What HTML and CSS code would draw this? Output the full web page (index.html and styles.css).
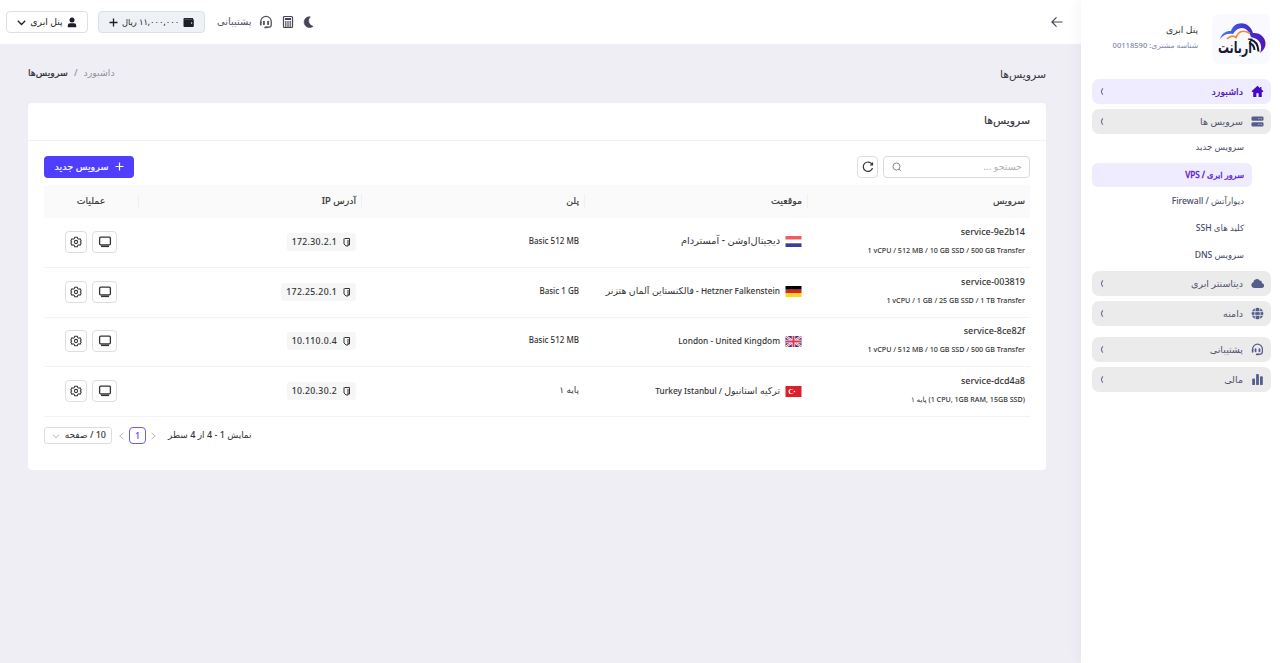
FILE: index.html
```html
<!DOCTYPE html>
<html lang="fa" dir="rtl">
<head>
    <meta charset="UTF-8">
    <meta name="viewport" content="width=device-width, initial-scale=1.0">
    <title>سرویس‌ها - پنل ابری</title>
    <link rel="stylesheet" href="styles.css">
</head>
<body>
    <svg class="sprite" width="0" height="0">
        <symbol id="chevron" viewBox="0 0 10 10"><path d="M6.200 1Q2.400 5 6.200 9" fill="none" stroke="currentColor" stroke-width="1.300"/></symbol>
        <symbol id="headset" viewBox="0 0 16 16"><path d="M2 9V7.500a6 6 0 0 1 12 0V11c0 2-1.500 3-4 3H8" fill="none" stroke="currentColor" stroke-width="1.500"/><rect x="1" y="7" width="2" height="5" rx="1" fill="currentColor"/><rect x="4.500" y="6.500" width="2.200" height="5" rx="1" fill="currentColor"/><rect x="9.300" y="6.500" width="2.200" height="5" rx="1" fill="currentColor"/><rect x="6" y="13" width="4" height="2.200" rx="1" fill="currentColor"/></symbol>
        <symbol id="copy" viewBox="0 0 9 10"><path d="M2.500 1.500h5v6.500h-1.500" fill="none" stroke="currentColor" stroke-width="1"/><path d="M2 1.500v5.500l2 2h2V3" fill="none" stroke="currentColor" stroke-width="1"/></symbol>
        <symbol id="monitor" viewBox="0 0 14 14"><rect x="1.600" y="2.200" width="10.800" height="7.600" rx="1" fill="none" stroke="currentColor" stroke-width="1.300"/><path d="M3 11.300h8" stroke="currentColor" stroke-width="1.600"/></symbol>
        <symbol id="gear" viewBox="0 0 14 14"><path d="M5.500 1.400h3l.5 1.700 1.100.6 1.700-.4 1.300 2.400-1.200 1.300 1.200 1.300-1.300 2.400-1.700-.4-1.100.6-.5 1.700h-3L5 10.900l-1.100-.6-1.700.4L.9 8.300 2.100 7 .9 5.700l1.300-2.400 1.700.4L5 3.100z" fill="none" stroke="currentColor" stroke-width="1.200" stroke-linejoin="round"/><circle cx="7" cy="7" r="1.900" fill="none" stroke="currentColor" stroke-width="1.200"/></symbol>
    </svg>

    <div class="app">
        <aside class="sidebar">
            <div class="brand">
                <div class="brand-logo">
                    <svg width="57" height="50" viewBox="0 0 57 50">
                        <defs>
                            <linearGradient id="cloud" x1="0" x2="1"><stop offset="0" stop-color="#4b7df2"/><stop offset=".5" stop-color="#3d3bd6"/><stop offset="1" stop-color="#5216b8"/></linearGradient>
                        </defs>
                        <path d="M7 25C9 18 14 17 18 17C21 7 36 6 40 19C51 18 58 31 47 39C50 31 47 25 38 23C35 12 25 11 20 20C15 19 11 20 7 25Z" fill="url(#cloud)"/>
                        <path d="M14 25q5-5 9-1.500q4-10 14-4" fill="none" stroke="#f38b3c" stroke-width="1.700"/>
                        <path d="M37 25.500q8 1.500 8.500 12M36 29q5 1 5.500 7" fill="none" stroke="#191a2c" stroke-width="2"/>
                        <text x="39" y="39" class="logo-text" direction="rtl" textLength="34" lengthAdjust="spacingAndGlyphs">آربانت</text>
                    </svg>
                </div>
                <div class="brand-info">
                    <div class="brand-name">پنل ابری</div>
                    <div class="brand-id">شناسه مشتری: 00118590</div>
                </div>
            </div>

            <nav class="menu">
                <a class="menu-item active">
                    <svg class="menu-icon" viewBox="0 0 14 14"><path d="M7 .8.6 6.700 1.600 7.800 2.400 7.200V13h3.400V9h2.400v4h3.400V7.200l.8.600 1-1.100-2.200-2V2.200H9.800v1.200z" fill="currentColor"/></svg>
                    <span>داشبورد</span>
                    <svg class="chevron"><use href="#chevron"/></svg>
                </a>
                <a class="menu-item">
                    <svg class="menu-icon" viewBox="0 0 14 14"><path d="M2 1.500h10a1.500 1.500 0 0 1 1.500 1.500v1.800A1.500 1.500 0 0 1 12 6.300H2A1.500 1.500 0 0 1 .5 4.800V3A1.500 1.500 0 0 1 2 1.500zM2 7.700h10a1.500 1.500 0 0 1 1.500 1.500V11a1.500 1.500 0 0 1-1.500 1.500H2A1.500 1.500 0 0 1 .5 11V9.200A1.500 1.500 0 0 1 2 7.700z" fill="currentColor"/><path d="M8 4h1m1.500 0h1M8 10h1m1.500 0h1" stroke="#ebebeb"/></svg>
                    <span>سرویس ها</span>
                    <svg class="chevron"><use href="#chevron"/></svg>
                </a>
                <div class="submenu">
                    <a>سرویس جدید</a>
                    <a class="active">سرور ابری / VPS</a>
                    <a>دیوارآتش / Firewall</a>
                    <a>کلید های SSH</a>
                    <a>سرویس DNS</a>
                </div>
                <a class="menu-item">
                    <svg class="menu-icon" viewBox="0 0 14 14"><path d="M3.300 11.800a3.200 3.200 0 0 1-.8-6.200A3.800 3.800 0 0 1 9.300 3.800a2.400 2.400 0 0 1 2.500 2.800 2.600 2.600 0 0 1-.5 5.200z" fill="currentColor"/></svg>
                    <span>دیتاسنتر ابری</span>
                    <svg class="chevron"><use href="#chevron"/></svg>
                </a>
                <a class="menu-item">
                    <svg class="menu-icon" viewBox="0 0 14 14"><circle cx="7" cy="7" r="6.300" fill="currentColor"/><path d="M.7 5h12.600M.7 9h12.600M4.800.7q-1.500 6.300 0 12.600M9.200.7q1.500 6.300 0 12.600" stroke="#ebebeb" stroke-width=".9" fill="none"/></svg>
                    <span>دامنه</span>
                    <svg class="chevron"><use href="#chevron"/></svg>
                </a>
                <a class="menu-item group-start">
                    <svg class="menu-icon"><use href="#headset"/></svg>
                    <span>پشتیبانی</span>
                    <svg class="chevron"><use href="#chevron"/></svg>
                </a>
                <a class="menu-item">
                    <svg class="menu-icon" viewBox="0 0 14 14"><rect x="1.300" y="6" width="3" height="7" rx="1" fill="currentColor"/><rect x="5.500" y="1" width="3" height="12" rx="1" fill="currentColor"/><rect x="9.700" y="3.500" width="3" height="9.500" rx="1" fill="currentColor"/></svg>
                    <span>مالی</span>
                    <svg class="chevron"><use href="#chevron"/></svg>
                </a>
            </nav>
        </aside>

        <div class="main">
            <header class="topbar">
                <svg class="back" width="12" height="12" viewBox="0 0 12 12"><path d="M11.500 6H1M5.500 1.300.9 6l4.600 4.700" fill="none" stroke="currentColor" stroke-width="1.200"/></svg>
                <div class="tools">
                    <svg class="moon" width="12" height="12" viewBox="0 0 12 12"><path d="M7.300.8A5.400 5.400 0 1 0 10 10.300 5.600 5.600 0 0 1 7.300.8z" fill="currentColor" stroke="currentColor" stroke-width=".6"/></svg>
                    <svg class="calc" width="12" height="14" viewBox="0 0 12 14"><rect x="1.500" y="1.500" width="9" height="11" rx="1" fill="none" stroke="currentColor" stroke-width="1.200"/><rect x="3" y="3" width="6" height="2" fill="currentColor"/><path d="M3 7h6M3 9h6M3 11h6" stroke="currentColor" stroke-width="1.400" stroke-dasharray="1.500 .75"/></svg>
                    <a class="support"><svg width="14" height="14"><use href="#headset"/></svg><span>پشتیبانی</span></a>
                    <button class="pill wallet">
                        <svg width="11" height="11" viewBox="0 0 11 11"><path d="M1.500 1H10v1.300h.3q.5 0 .5.600v6.200q0 .9-.9.900H1.500Q.5 10 .5 9V2Q.5 1 1.500 1z" fill="currentColor"/><path d="M1.500 2.300h8" stroke="#aaa" stroke-width=".4"/><circle cx="8.600" cy="6" r=".7" fill="#eef1f6"/></svg>
                        <span>۱۱,۰۰۰,۰۰۰ ریال</span>
                        <svg width="9" height="9" viewBox="0 0 9 9"><path d="M4.500.5v8M.5 4.500h8" stroke="currentColor" stroke-width="1.300"/></svg>
                    </button>
                    <button class="pill account">
                        <svg width="10" height="11" viewBox="0 0 10 11"><circle cx="5" cy="3" r="2.500" fill="currentColor"/><path d="M.8 10.200V8.500Q.8 6.300 3 6.300h4q2.200 0 2.200 2.200v1.700z" fill="currentColor"/></svg>
                        <span>پنل ابری</span>
                        <svg width="9" height="9" viewBox="0 0 9 9"><path d="m.8 2.700 3.700 3.800 3.700-3.800" fill="none" stroke="currentColor" stroke-width="1.300"/></svg>
                    </button>
                </div>
            </header>

            <div class="page-head">
                <h1>سرویس‌ها</h1>
                <div class="breadcrumb"><span>داشبورد</span><i>/</i><b>سرویس‌ها</b></div>
            </div>

            <section class="card">
                <h2 class="card-title">سرویس‌ها</h2>
                <div class="card-body">
                    <div class="toolbar">
                        <div class="search"><span>جستجو ...</span><svg width="10" height="10" viewBox="0 0 10 10"><circle cx="4.500" cy="4.500" r="3.500" fill="none" stroke="currentColor"/><path d="m7 7 2.200 2.200" stroke="currentColor"/></svg></div>
                        <button class="icon-btn reload"><svg width="12" height="12" viewBox="0 0 12 12"><path d="M10 3.300A4.700 4.700 0 1 0 10.500 7M10.500 1.500v2.500H8" fill="none" stroke="currentColor" stroke-width="1.200"/></svg></button>
                        <button class="primary"><svg width="9" height="9" viewBox="0 0 9 9"><path d="M4.500.5v8M.5 4.500h8" stroke="currentColor" stroke-width="1.200"/></svg><span>سرویس جدید</span></button>
                    </div>

                    <div class="table">
                        <div class="row head">
                            <div>سرویس</div><div>موقعیت</div><div>پلن</div><div>آدرس IP</div><div>عملیات</div>
                        </div>
                        <div class="row">
                            <div class="service"><bdi>service-9e2b14</bdi><small><bdi>1 vCPU / 512 MB / 10 GB SSD / 500 GB Transfer</bdi></small></div>
                            <div class="location"><svg class="flag" viewBox="0 0 16 11"><path fill="#ef5b5f" d="M0 0h16v3.700H0z"/><path fill="#fff" d="M0 3.700h16v3.600H0z"/><path fill="#3d3aa0" d="M0 7.300h16V11H0z"/></svg><span class="fa">دیجیتال‌اوشن - آمستردام</span></div>
                            <div class="plan">Basic 512 MB</div>
                            <div><span class="ip"><svg width="9" height="10"><use href="#copy"/></svg>172.30.2.1</span></div>
                            <div class="actions"><button class="icon-btn wide"><svg width="14" height="14"><use href="#monitor"/></svg></button><button class="icon-btn"><svg width="12" height="12"><use href="#gear"/></svg></button></div>
                        </div>
                        <div class="row">
                            <div class="service"><bdi>service-003819</bdi><small><bdi>1 vCPU / 1 GB / 25 GB SSD / 1 TB Transfer</bdi></small></div>
                            <div class="location"><svg class="flag" viewBox="0 0 16 11"><path d="M0 0h16v3.700H0z"/><path fill="#d62718" d="M0 3.700h16v3.600H0z"/><path fill="#ffd51c" d="M0 7.300h16V11H0z"/></svg><span>Hetzner Falkenstein - <span class="fa">فالکنستاین آلمان هتزنر</span></span></div>
                            <div class="plan">Basic 1 GB</div>
                            <div><span class="ip"><svg width="9" height="10"><use href="#copy"/></svg>172.25.20.1</span></div>
                            <div class="actions"><button class="icon-btn wide"><svg width="14" height="14"><use href="#monitor"/></svg></button><button class="icon-btn"><svg width="12" height="12"><use href="#gear"/></svg></button></div>
                        </div>
                        <div class="row">
                            <div class="service"><bdi>service-8ce82f</bdi><small><bdi>1 vCPU / 512 MB / 10 GB SSD / 500 GB Transfer</bdi></small></div>
                            <div class="location"><svg class="flag" viewBox="0 0 16 11"><path fill="#373b91" d="M0 0h16v11H0z"/><path stroke="#fff" stroke-width="2.200" d="m0 0 16 11M16 0 0 11"/><path stroke="#dc3650" stroke-width=".8" d="m0 0 16 11M16 0 0 11"/><path stroke="#fff" stroke-width="3.400" d="M8 0v11M0 5.500h16"/><path stroke="#dc3650" stroke-width="2" d="M8 0v11M0 5.500h16"/></svg><bdi>London - United Kingdom</bdi></div>
                            <div class="plan">Basic 512 MB</div>
                            <div><span class="ip"><svg width="9" height="10"><use href="#copy"/></svg>10.110.0.4</span></div>
                            <div class="actions"><button class="icon-btn wide"><svg width="14" height="14"><use href="#monitor"/></svg></button><button class="icon-btn"><svg width="12" height="12"><use href="#gear"/></svg></button></div>
                        </div>
                        <div class="row">
                            <div class="service"><bdi>service-dcd4a8</bdi><small><bdi>(1 CPU, 1GB RAM, 15GB SSD)</bdi> پایه ۱</small></div>
                            <div class="location"><svg class="flag" viewBox="0 0 16 11"><path fill="#d9202c" d="M0 0h16v11H0z"/><circle cx="5.500" cy="5.500" r="2.500" fill="#fff"/><circle cx="6.200" cy="5.500" r="2" fill="#d9202c"/><path fill="#fff" d="m7.800 5.500 1.800-.8v1.600z"/></svg><span><span class="fa">ترکیه استانبول</span> / Turkey Istanbul</span></div>
                            <div class="plan fa">پایه ۱</div>
                            <div><span class="ip"><svg width="9" height="10"><use href="#copy"/></svg>10.20.30.2</span></div>
                            <div class="actions"><button class="icon-btn wide"><svg width="14" height="14"><use href="#monitor"/></svg></button><button class="icon-btn"><svg width="12" height="12"><use href="#gear"/></svg></button></div>
                        </div>
                    </div>

                    <div class="pagination">
                        <span class="total">نمایش 1 - 4 از 4 سطر</span>
                        <svg class="arrow" width="7" height="8" viewBox="0 0 7 8"><path d="m1.500 1 3.800 3-3.800 3" fill="none" stroke="currentColor"/></svg>
                        <span class="page">1</span>
                        <svg class="arrow" width="7" height="8" viewBox="0 0 7 8"><path d="M5.500 1 1.700 4l3.800 3" fill="none" stroke="currentColor"/></svg>
                        <span class="page-size"><span>10 / صفحه</span><svg width="8" height="8" viewBox="0 0 8 8"><path d="m1 2.500 3 3.500 3-3.500" fill="none" stroke="#bbb"/></svg></span>
                    </div>
                </div>
            </section>
        </div>
    </div>
</body>
</html>
```
FILE: styles.css
```css
* {
    box-sizing: border-box;
}
body {
    margin: 0;
    font-family: "Noto Sans", "DejaVu Sans", sans-serif;
    font-size: 9px;
    font-weight: 500;
    color: #333;
    background: #efeef5;
}
button {
    font: inherit;
    color: inherit;
    padding: 0;
}
svg {
    flex: none;
    display: block;
}
.sprite {
    position: absolute;
}
.app {
    display: flex;
    height: 663px;
    overflow: hidden;
}
.sidebar {
    width: 199px;
    flex: none;
    background: #fff;
    padding: 14px 9px 0 11px;
    box-shadow: 0 0 14px rgba(60, 50, 110, 0.07);
    z-index: 1;
}
.brand {
    display: flex;
    gap: 14px;
    height: 65px;
    padding-right: 1px;
}
.brand-logo {
    width: 58px;
    height: 50px;
    border-radius: 7px;
    background: #f9faff;
}
.logo-text {
    font: bold 16px "DejaVu Sans", sans-serif;
    fill: #191a2c;
}
.brand-info {
    padding-top: 8px;
    white-space: nowrap;
}
.brand-name {
    font-size: 9.2px;
    line-height: 16px;
}
.brand-id {
    font-size: 7.6px;
    line-height: 15px;
    color: #8388a7;
}
.menu {
    display: flex;
    flex-direction: column;
    gap: 5px;
}
.menu-item {
    display: flex;
    align-items: center;
    height: 25px;
    padding: 0 7px 0 6px;
    border-radius: 7px;
    background: #ebebeb;
    color: #50536f;
    font-size: 9.5px;
}
.menu-item.active {
    background: #efecff;
    color: #4908c4;
    -webkit-text-stroke: 0.2px;
}
.menu-item.group-start {
    margin-top: 6px;
}
.menu-item span {
    margin-right: 8px;
    padding-bottom: 1px;
    flex: 1;
}
.menu-icon {
    width: 13px;
    height: 13px;
    color: #555d8c;
}
.active .menu-icon {
    color: #4908c4;
}
.chevron {
    width: 8px;
    height: 9px;
    color: #666b94;
}
.submenu {
    display: flex;
    flex-direction: column;
    gap: 3px;
    margin: -3px 19px -2px 0;
    font-size: 8.6px;
    color: #494c66;
}
.submenu a {
    height: 24px;
    line-height: 23px;
    padding-right: 8px;
    border-radius: 6px;
}
.submenu .active {
    background: #efecff;
    color: #5a20cf;
    font-size: 8.2px;
    -webkit-text-stroke: 0.3px;
}
.main {
    flex: 1;
}
.topbar {
    height: 44px;
    background: #fff;
    display: flex;
    align-items: center;
    justify-content: space-between;
    padding: 0 18px 0 6px;
    color: #454557;
}
.tools {
    display: flex;
    align-items: center;
}
.calc {
    margin: 0 9px;
}
.support {
    display: flex;
    align-items: center;
    gap: 7px;
    margin-left: 12px;
    font-size: 9.9px;
    color: #55565f;
}
.support span,
.pill span {
    padding-bottom: 2px;
}
.pill {
    height: 22px;
    border: 1px solid #dcdfe6;
    border-radius: 4px;
    background: #fff;
    display: flex;
    align-items: center;
    justify-content: space-between;
    color: #1d1e26;
}
.wallet {
    width: 107px;
    padding: 0 10px;
    background: #eef1f6;
    margin-left: 10px;
    font-size: 8.3px;
}
.account {
    width: 82px;
    padding: 0 10px;
    font-size: 9.3px;
}
.page-head {
    display: flex;
    align-items: center;
    justify-content: space-between;
    height: 59px;
    padding: 0 35px 1px 28px;
}
h1,
h2 {
    margin: 0;
    font-size: 10.8px;
    font-weight: 500;
    color: #38383e;
}
.breadcrumb {
    display: flex;
    gap: 6px;
    padding-bottom: 1px;
    font-size: 9.4px;
    color: #929199;
}
.breadcrumb i {
    font-style: normal;
}
.breadcrumb b {
    font-weight: 500;
    color: #2c2b32;
    -webkit-text-stroke: 0.2px;
}
.card {
    margin: 0 35px 0 28px;
    height: 367px;
    background: #fff;
    border-radius: 4px;
}
.card-title {
    height: 38px;
    line-height: 34px;
    padding-right: 16px;
    border-bottom: 1px solid #f2f2f2;
    -webkit-text-stroke: 0.2px;
}
.card-body {
    padding: 15px 16px;
}
.toolbar {
    display: flex;
    gap: 5px;
    height: 29px;
}
.search {
    width: 147px;
    height: 22px;
    border: 1px solid #dadada;
    border-radius: 4px;
    display: flex;
    align-items: center;
    justify-content: space-between;
    padding: 0 7px 0 8px;
    font-size: 9.5px;
    color: #b5b5b5;
}
.search span {
    padding-bottom: 2px;
}
.search svg {
    color: #888;
}
.icon-btn {
    width: 22px;
    height: 22px;
    border: 1px solid #dedede;
    border-radius: 4px;
    background: #fff;
    display: flex;
    align-items: center;
    justify-content: center;
}
.icon-btn.wide {
    width: 25px;
}
.icon-btn.reload {
    width: 21px;
}
.primary {
    width: 90px;
    height: 22px;
    margin-right: auto;
    padding-bottom: 1px;
    border: 0;
    border-radius: 4px;
    background: #503eff;
    color: #fff;
    font-size: 9.6px;
    -webkit-text-stroke: 0.2px;
    display: flex;
    align-items: center;
    justify-content: center;
    gap: 6px;
}
.row {
    display: grid;
    grid-template-columns: repeat(4, 223px) 94px;
    align-items: center;
    height: 49.75px;
    padding-bottom: 1px;
    border-bottom: 1px solid #f3f3f3;
}
.row > div {
    padding: 0 5px;
}
.row.head {
    height: 33px;
    background: #fafafa;
    border: 0;
    font-size: 9.4px;
    -webkit-text-stroke: 0.15px;
}
.row.head > div {
    height: 15px;
    line-height: 13px;
    border-left: 1px solid #f0f0f0;
}
.row.head > div:last-child {
    border: 0;
    text-align: center;
}
.service {
    font-size: 9px;
    line-height: 16px;
}
.service bdi,
.location bdi {
    direction: ltr;
}
.service small {
    display: block;
    font-size: 7.15px;
    line-height: 20px;
}
.location {
    display: flex;
    align-items: center;
    gap: 5px;
    font-size: 8.3px;
    white-space: nowrap;
}
.location > span,
.location > bdi {
    padding-bottom: 2px;
}
.location .fa {
    font-size: 9.4px;
}
.location > .fa {
    font-size: 9.8px;
}
.flag {
    width: 17px;
    height: 11px;
}
.row > .plan {
    padding-bottom: 3px;
    font-size: 8px;
    direction: ltr;
    text-align: right;
}
.row > .plan.fa {
    font-size: 9px;
    direction: rtl;
}
.ip {
    display: inline-flex;
    align-items: center;
    gap: 5px;
    height: 18px;
    padding: 0 5px;
    border-radius: 3px;
    background: #f6f6f6;
    font-size: 8.7px;
    letter-spacing: 0.35px;
}
.actions {
    display: flex;
    justify-content: center;
    gap: 5px;
}
.pagination {
    display: flex;
    align-items: center;
    justify-content: flex-end;
    height: 37px;
}
.total {
    margin-left: 11px;
}
.total,
.page-size span {
    padding-bottom: 2px;
}
.arrow {
    color: #b8b8b8;
}
.page {
    width: 17px;
    height: 17px;
    margin: 0 4px;
    border: 1px solid #6b5cf5;
    border-radius: 4px;
    color: #5946ef;
    text-align: center;
    line-height: 15px;
}
.page-size {
    width: 68px;
    height: 17px;
    margin-right: 6px;
    border: 1px solid #dedede;
    border-radius: 3px;
    padding: 0 5px 0 7px;
    display: flex;
    align-items: center;
    justify-content: space-between;
}
```
